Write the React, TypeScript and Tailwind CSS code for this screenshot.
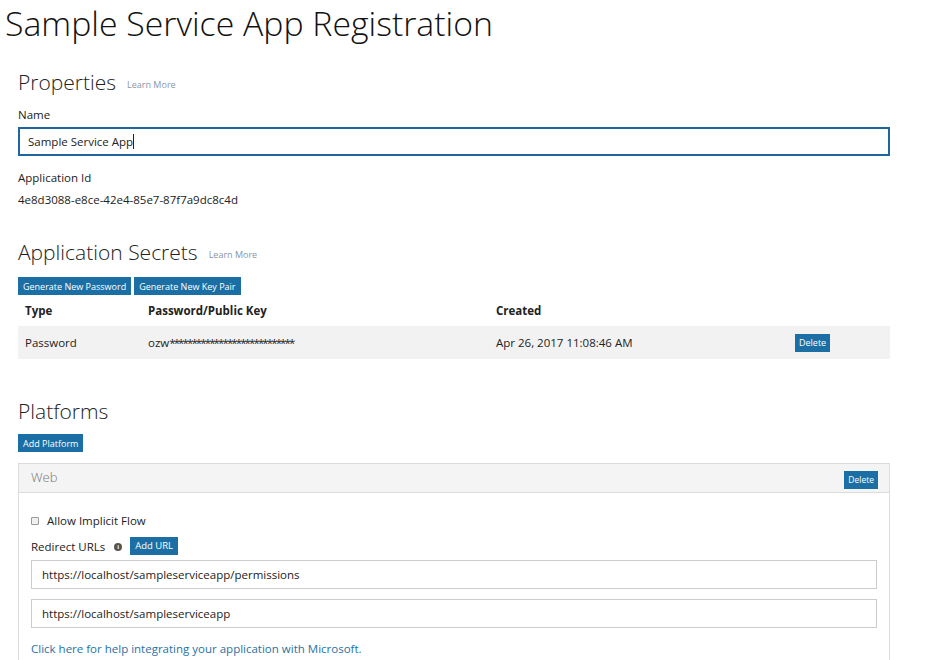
import React from 'react';

const Btn = ({ children, className = '' }: { children: React.ReactNode; className?: string }) => (
  <button className={`bg-[#1b6fa5] text-white leading-none h-[18px] ${className}`}>{children}</button>
);

const SectionTitle = ({ title, learn = true }: { title: string; learn?: boolean }) => (
  <div className="flex items-end gap-[11px] h-[32px]">
    <h2 className="text-[21px] font-light leading-[32px] text-[#222]">{title}</h2>
    {learn && <a className="text-[9px] text-[#8796a8] leading-none mb-[9px]">Learn More</a>}
  </div>
);

export default function App() {
  return (
    <div className="w-[926px] h-[660px] overflow-hidden bg-white text-[#222] text-[11.5px] font-['Open_Sans',sans-serif]">
      <h1 className="pl-[5px] text-[33.8px] font-light leading-[46px] text-[#111]">Sample Service App Registration</h1>

      <div className="pl-[18px] w-[890px]">
        {/* Properties */}
        <div className="mt-[20px]">
          <SectionTitle title="Properties" />
        </div>
        <div className="mt-[9px] leading-[16px]">Name</div>
        <div className="mt-[4px] h-[29px] border-2 border-[#1f66a0] flex items-center pl-[8px]">
          Sample Service App<span className="inline-block w-px h-[15px] bg-[#222]" />
        </div>
        <div className="mt-[14px] leading-[16px]">Application Id</div>
        <div className="mt-[6px] leading-[16px]">4e8d3088-e8ce-42e4-85e7-87f7a9dc8c4d</div>

        {/* Secrets */}
        <div className="mt-[28px]">
          <SectionTitle title="Application Secrets" />
        </div>
        <div className="mt-[9px] flex gap-[3px]">
          <Btn className="text-[9px] px-[5px]">Generate New Password</Btn>
          <Btn className="text-[9px] px-[5px]">Generate New Key Pair</Btn>
        </div>
        <div className="grid grid-cols-[123px_348px_299px_1fr] h-[31px] items-center pl-[7px] font-bold">
          <div>Type</div>
          <div>Password/Public Key</div>
          <div>Created</div>
          <div />
        </div>
        <div className="grid grid-cols-[123px_348px_299px_1fr] h-[33px] items-center pl-[7px] bg-[#f2f2f2]">
          <div>Password</div>
          <div>ozw<span className="tracking-[-1.9px]">****************************</span></div>
          <div>Apr 26, 2017 11:08:46 AM</div>
          <div><Btn className="text-[9px] px-[4px]">Delete</Btn></div>
        </div>

        {/* Platforms */}
        <div className="mt-[36px]">
          <SectionTitle title="Platforms" learn={false} />
        </div>
        <div className="mt-[7px] flex">
          <Btn className="text-[9px] px-[5px]">Add Platform</Btn>
        </div>
        <div className="mt-[11px] border border-[#dcdcdc]">
          <div className="h-[29px] bg-[#f4f4f4] border-b border-[#dcdcdc] flex items-center justify-between pl-[12px] pr-[11px]">
            <span className="text-[13px] text-[#777] font-light">Web</span>
            <Btn className="mt-[4px] text-[8.5px] px-[4px]">Delete</Btn>
          </div>
          <div className="px-[12px] pb-[10px]">
            <label className="mt-[20px] flex items-center gap-[8px] leading-[16px]">
              <span className="w-[8px] h-[8px] border border-[#999] bg-[#f0f0f0] rounded-[1px]" />
              Allow Implicit Flow
            </label>
            <div className="mt-[8px] flex items-end h-[18px]">
              <span className="leading-[16px]">Redirect URLs</span>
              <span className="ml-[9px] mb-[4px] w-[8px] h-[8px] rounded-full bg-[#555] text-white text-[6px] leading-[8px] text-center font-bold">i</span>
              <Btn className="ml-[8px] text-[9.5px] px-[5px]">Add URL</Btn>
            </div>
            <div className="mt-[5px] h-[29px] border border-[#ccc] flex items-center pl-[10px]">https://localhost/sampleserviceapp/permissions</div>
            <div className="mt-[10px] h-[29px] border border-[#ccc] flex items-center pl-[10px]">https://localhost/sampleserviceapp</div>
            <a className="block mt-[12px] text-[#2672a8]">Click here for help integrating your application with Microsoft.</a>
          </div>
        </div>
      </div>
    </div>
  );
}
